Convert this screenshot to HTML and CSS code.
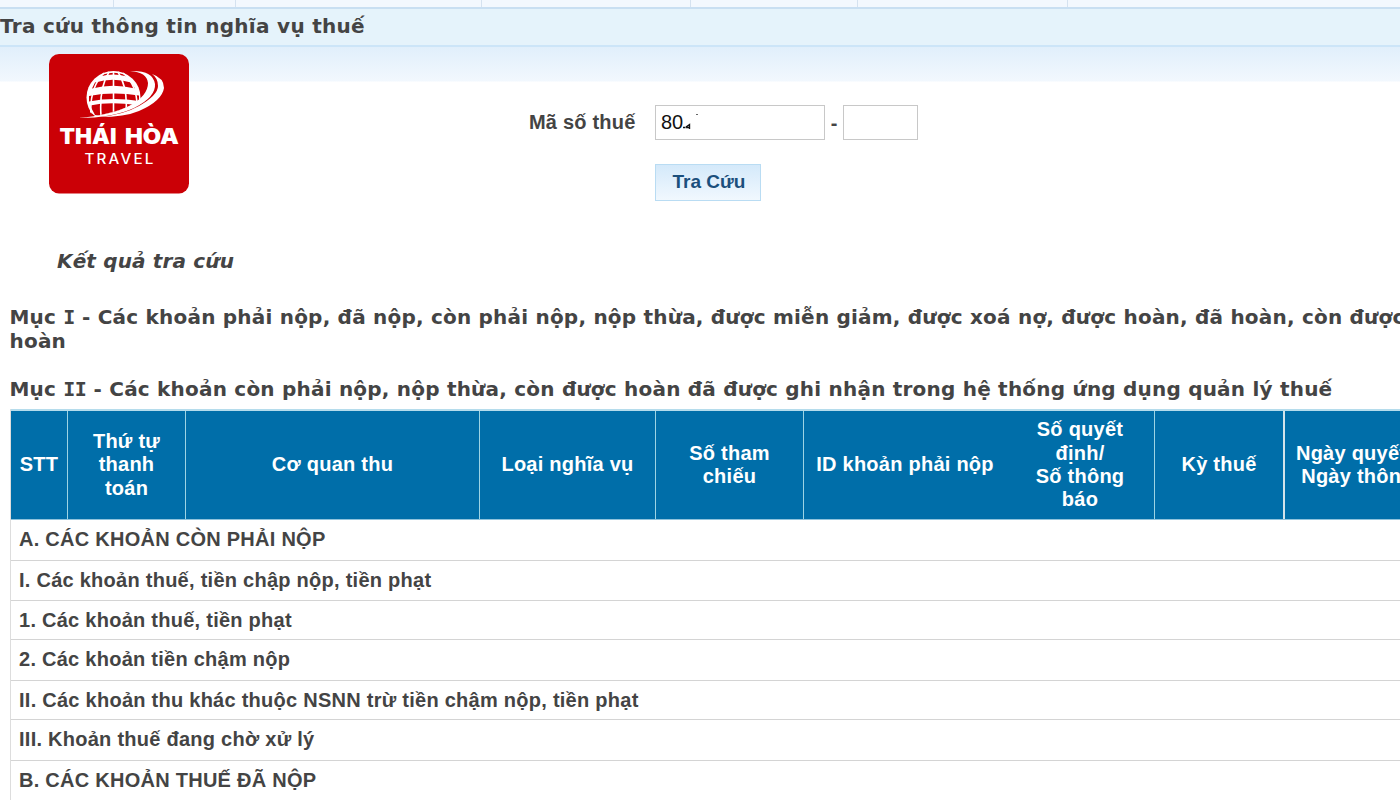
FILE: index.html
```html
<!DOCTYPE html>
<html lang="vi">
<head>
<meta charset="utf-8">
<title>Tra cứu thông tin nghĩa vụ thuế</title>
<link rel="stylesheet" href="styles.css">
</head>
<body>
<div class="tabs"><i></i><i></i><i></i><i></i><i></i><i></i><i></i></div>
<h1 class="title">Tra cứu thông tin nghĩa vụ thuế</h1>
<section class="search">
  <svg class="logo" viewBox="0 0 140 140" width="140" height="140">
    <rect width="140" height="139.500" rx="10" fill="#cb0006"/>
    <!-- globe -->
    <clipPath id="globe"><path d="M30 10H100V40Q84 55 46 62L38 56Z"/></clipPath>
    <g clip-path="url(#globe)">
      <ellipse cx="64.500" cy="43.500" rx="27" ry="26.500" fill="#fff"/>
      <path d="M54 20.500Q65 17 75 20.500L78 22.500Q64 18.500 51 22.500ZM46 28.500Q64 23 82 28.500L86 34.500Q64 29 43 34.500ZM40 42Q64 37.500 90 41.500L90 47Q64 43 40 47.500ZM41 51.500Q60 47.500 88 51L86 57 60 61 46 61Z" fill="#cb0006"/>
      <path d="M64.500 18V62M60 18Q50 34 52 62M69 18Q79 34 77 58M55 19Q40 34 42 62M74 19Q89 32 88 55" fill="none" stroke="#fff" stroke-width="1.600"/>
    </g>
    <!-- orbit -->
    <path d="M81 17Q98 18 99 29Q99 42 80 52Q62 61 29 64Q64 64 85 54Q107 43 106 30Q104 16 81 17Z" fill="#fff"/>
    <path d="M103 20Q115 24 115 34Q113 47 90 57Q76 63 50 63Q74 61 90 52Q109 41 109 32Q109 24 103 20Z" fill="#fff"/>
    <text class="logo-name" y="90"><tspan x="10.500" textLength="57" lengthAdjust="spacingAndGlyphs">THÁI</tspan> <tspan x="76" textLength="54" lengthAdjust="spacingAndGlyphs">HÒA</tspan></text>
    <text class="logo-sub" x="35.500" y="110" textLength="71" lengthAdjust="spacingAndGlyphs">TRAVEL</text>
  </svg>
  <div class="form">
    <label class="lab" for="mst">Mã số thuế</label>
    <div class="line">
      <div class="field big" id="mst"><span>80</span><svg width="42" height="20" viewBox="0 0 42 20"><path d="M0 15.500H2.500M3 15L6.500 12.500V17M3 15.500H7" stroke="#111" stroke-width="1.400" fill="none"/><path d="M13 2.500H15" stroke="#666"/></svg></div>
      <span class="dash">-</span>
      <div class="field small"></div>
    </div>
    <button class="go">Tra Cứu</button>
  </div>
</section>
<main class="result">
  <h2 class="kq">Kết quả tra cứu</h2>
  <h3 class="muc one">Mục <b>I</b> - Các khoản phải nộp, đã nộp, còn phải nộp, nộp thừa, được miễn giảm, được xoá nợ, được hoàn, đã hoàn, còn được<br>hoàn</h3>
  <h3 class="muc two">Mục <b>II</b> - Các khoản còn phải nộp, nộp thừa, còn được hoàn đã được ghi nhận trong hệ thống ứng dụng quản lý thuế</h3>
  <div class="table">
    <div class="head">
      <div class="c">STT</div>
      <div class="c">Thứ tự<br>thanh<br>toán</div>
      <div class="c">Cơ quan thu</div>
      <div class="c">Loại nghĩa vụ</div>
      <div class="c">Số tham<br>chiếu</div>
      <div class="c plain">ID khoản phải nộp</div>
      <div class="c">Số quyết<br>định/<br>Số thông<br>báo</div>
      <div class="c wide">Kỳ thuế</div>
      <div class="c">Ngày quyết định/<br>Ngày thông báo</div>
    </div>
    <div class="row r41">A. CÁC KHOẢN CÒN PHẢI NỘP</div>
    <div class="row">I. Các khoản thuế, tiền chập nộp, tiền phạt</div>
    <div class="row r39">1. Các khoản thuế, tiền phạt</div>
    <div class="row r41">2. Các khoản tiền chậm nộp</div>
    <div class="row r39">II. Các khoản thu khác thuộc NSNN trừ tiền chậm nộp, tiền phạt</div>
    <div class="row r41">III. Khoản thuế đang chờ xử lý</div>
    <div class="row">B. CÁC KHOẢN THUẾ ĐÃ NỘP</div>
  </div>
</main>
</body>
</html>
```
FILE: styles.css
```css
* { box-sizing: border-box; }
body {
  margin: 0;
  width: 1400px;
  height: 800px;
  overflow: hidden;
  background: #fff;
  color: #444;
  font: bold 20px/24px "Liberation Sans", Arial, sans-serif;
}
.tabs {
  display: grid;
  grid-template-columns: 114px 122px 246px 209px 167px 210px 1fr;
  height: 7px;
  background: #f3f8fe;
}
.tabs i { border-right: 1px solid #d5e2f0; }
.tabs i:last-child { border: 0; }
.title {
  margin: 0;
  height: 40px;
  border-top: 2px solid #c9dff2;
  border-bottom: 2px solid #cce5f8;
  background: #e5f3fb;
  line-height: 34px;
  letter-spacing: 0.3px;
  white-space: nowrap;
}
.title, .kq, .muc {
  font-family: "DejaVu Sans", sans-serif;
  font-size: 20px;
  font-weight: bold;
}
.search {
  display: flex;
  height: 188px;
  padding: 6.500px 0 0 49px;
  background: linear-gradient(#e1effb, #f2f8fe 34px, #fff 35px);
}
.logo { flex: none; display: block; }
.logo-name { font: 900 22px Inter, sans-serif; fill: #fff; }
.logo-sub { font: 500 14px Inter, sans-serif; letter-spacing: 2px; fill: #fff; }
.form {
  display: grid;
  grid-template-columns: 126px 300px;
  grid-template-rows: 36px 37px;
  row-gap: 22.500px;
  margin: 51.500px 0 0 340px;
  align-content: start;
}
.lab { line-height: 35px; letter-spacing: 0.2px; }
.line { display: flex; }
.field { height: 35px; border: 1px solid #c8c8c8; background: #fff; }
.big {
  display: flex;
  align-items: center;
  width: 170px;
  padding: 0 0 2px 5px;
  color: #111;
  font-weight: normal;
}
.small { width: 75px; }
.dash { width: 18px; text-align: center; line-height: 36px; }
.go {
  grid-column: 2;
  width: 106px;
  height: 37px;
  padding: 0 0 0 2px;
  border: 1px solid #b9dcf3;
  background: linear-gradient(#d4e9fa, #f1f8fe);
  color: #1b4f7c;
  font: bold 19px "Liberation Sans", Arial, sans-serif;
}
.result { padding-left: 10px; }
.kq {
  margin: 0;
  padding: 14px 0 0 47px;
  font-style: italic;
  letter-spacing: 0.15px;
}
.muc {
  margin: 0 0 0 -0.5px;
  letter-spacing: 0.21px;
  white-space: nowrap;
}
.muc b { font-family: "DejaVu Sans Mono", monospace; letter-spacing: -0.5px; }
.one { margin-top: 32px; }
.two { margin-top: 24px; }
.table {
  width: 1462px;
  margin-top: 8px;
  border-left: 1px solid #ddd;
}
.head {
  display: grid;
  grid-template-columns: 57px 118px 294px 176px 148px 202px 149px 130px 1fr;
  height: 111px;
  border-top: 2px solid #b5dcec;
  border-bottom: 1px solid #8fc3dc;
  background: #006ea9;
  color: #fff;
  line-height: 23.300px;
  letter-spacing: 0.25px;
}
.c {
  display: flex;
  align-items: center;
  justify-content: center;
  text-align: center;
  border-right: 1px solid #9dd4e4;
  white-space: nowrap;
}
.c:last-child { border: 0; }
.plain { border-right: 0; }
.wide { border-right: 2px solid #d3e3ea; }
.row {
  height: 40px;
  padding-left: 8px;
  border-bottom: 1px solid #d4d4d4;
  line-height: 38px;
  letter-spacing: 0.26px;
  white-space: nowrap;
}
.row:last-child { border: 0; }
.r41 { height: 41px; line-height: 39px; }
.r39 { height: 39px; }
```
